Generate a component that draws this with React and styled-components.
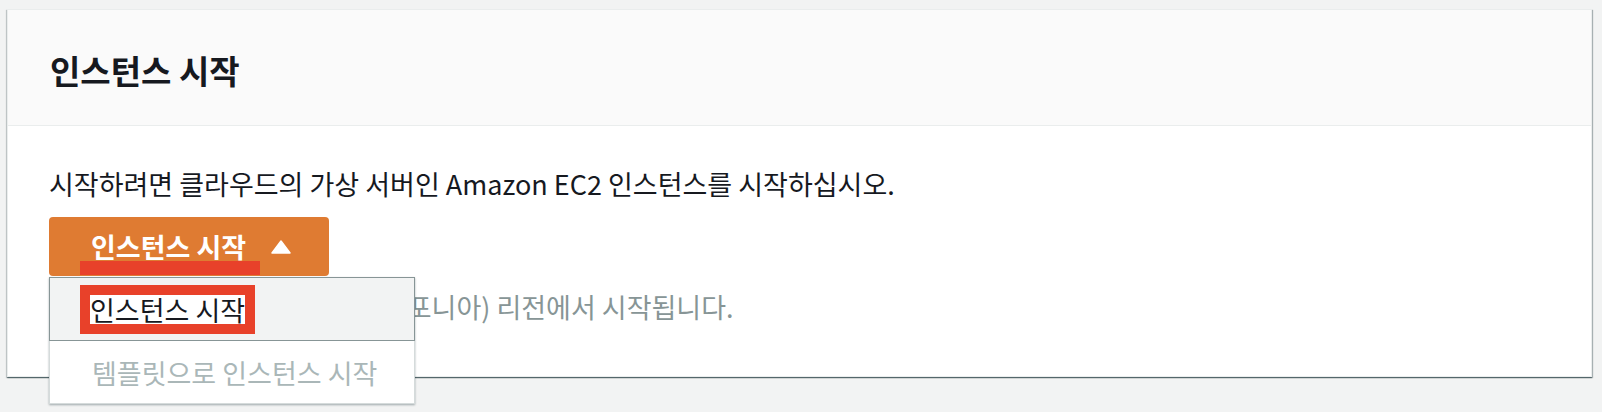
import React from 'react';
import styled, { createGlobalStyle } from 'styled-components';

const GlobalStyle = createGlobalStyle`
  html, body {
    margin: 0;
    padding: 0;
    background: #f2f3f3;
  }
  body {
    font-family: "Noto Sans CJK KR", "Noto Sans", sans-serif;
    color: #16191f;
  }
`;

const Page = styled.div`
  padding: 9px 10px 0 7px;
  height: 412px;
  box-sizing: border-box;
`;

const Card = styled.section`
  width: 1585px;
  background: #fff;
  border: 1px solid #eaeded;
  box-sizing: border-box;
  box-shadow: 0 1px 1px 0 rgba(0, 28, 36, 0.45),
    1px 1px 1px 0 rgba(0, 28, 36, 0.25), -1px 1px 1px 0 rgba(0, 28, 36, 0.15);
`;

const CardHeader = styled.header`
  background: #fafafa;
  border-bottom: 1px solid #eaeded;
  padding: 40px 42px 35px;
`;

const Title = styled.h2`
  margin: 0;
  font-size: 33px;
  line-height: 40px;
  font-weight: 700;
  color: #16191f;
`;

const CardBody = styled.div`
  padding: 42px 41px 53px;
`;

const Text = styled.p`
  margin: 0;
  font-size: 27px;
  line-height: 32px;
  color: ${(p) => p.color || '#16191f'};
  white-space: nowrap;
`;

const Note = styled(Text)`
  margin-top: 15px;
`;

const ButtonWrap = styled.div`
  position: relative;
  display: inline-block;
  margin-top: 17px;
  vertical-align: top;
`;

const LaunchButton = styled.button`
  display: flex;
  align-items: center;
  gap: 25px;
  height: 59px;
  width: 280px;
  padding: 0 0 0 42px;
  border: none;
  border-radius: 4px;
  background: #df7b32;
  color: #fff;
  font-family: inherit;
  font-size: 27px;
  font-weight: 700;
  cursor: pointer;
`;

const ButtonLabel = styled.span`
  position: relative;
  line-height: 32px;
  white-space: nowrap;
`;

const Underline = styled.span`
  position: absolute;
  left: -11px;
  right: -14px;
  top: 30px;
  height: 14px;
  background: #e8412a;
`;

const Caret = styled.svg`
  width: 20px;
  height: 14px;
  flex: none;
`;

const Menu = styled.ul`
  position: absolute;
  top: calc(100% + 1px);
  left: 0;
  width: 366px;
  margin: 0;
  padding: 0;
  list-style: none;
  background: #fff;
  border: 1px solid #d5dbdb;
  box-sizing: border-box;
  box-shadow: 0 1px 2px 0 rgba(0, 28, 36, 0.35);
  z-index: 2;
`;

const MenuItem = styled.li`
  display: flex;
  align-items: center;
  box-sizing: border-box;
  height: ${(p) => (p.active ? '64px' : '62px')};
  padding-left: ${(p) => (p.active ? '30px' : '42px')};
  font-size: 27px;
  white-space: nowrap;
  color: ${(p) => (p.disabled ? '#aab7b8' : '#16191f')};
  background: ${(p) => (p.active ? '#f2f3f3' : '#fff')};
  border: ${(p) => (p.active ? '1px solid #879596' : 'none')};
  margin: ${(p) => (p.active ? '-1px -1px 0' : '0')};
`;

const Highlight = styled.span`
  display: inline-block;
  background: #fff;
  border: 10px solid #e8412a;
  line-height: 29px;
`;

const App = () => {
  return (
    <>
      <GlobalStyle />
      <Page>
        <Card>
          <CardHeader>
            <Title>인스턴스 시작</Title>
          </CardHeader>
          <CardBody>
            <Text>
              시작하려면 클라우드의 가상 서버인 Amazon EC2 인스턴스를 시작하십시오.
            </Text>
            <ButtonWrap>
              <LaunchButton>
                <ButtonLabel>
                  인스턴스 시작
                  <Underline />
                </ButtonLabel>
                <Caret viewBox="0 0 20 14">
                  <path d="M10 1 L19 13 L1 13 Z" fill="#fff" strokeLinejoin="round" stroke="#fff" strokeWidth="1.5" />
                </Caret>
              </LaunchButton>
              <Menu>
                <MenuItem active>
                  <Highlight>인스턴스 시작</Highlight>
                </MenuItem>
                <MenuItem disabled>템플릿으로 인스턴스 시작</MenuItem>
              </Menu>
            </ButtonWrap>
            <Note color="#879596">
              참고: 인스턴스는 미국 서부(캘리포니아) 리전에서 시작됩니다.
            </Note>
          </CardBody>
        </Card>
      </Page>
    </>
  );
};

export default App;
